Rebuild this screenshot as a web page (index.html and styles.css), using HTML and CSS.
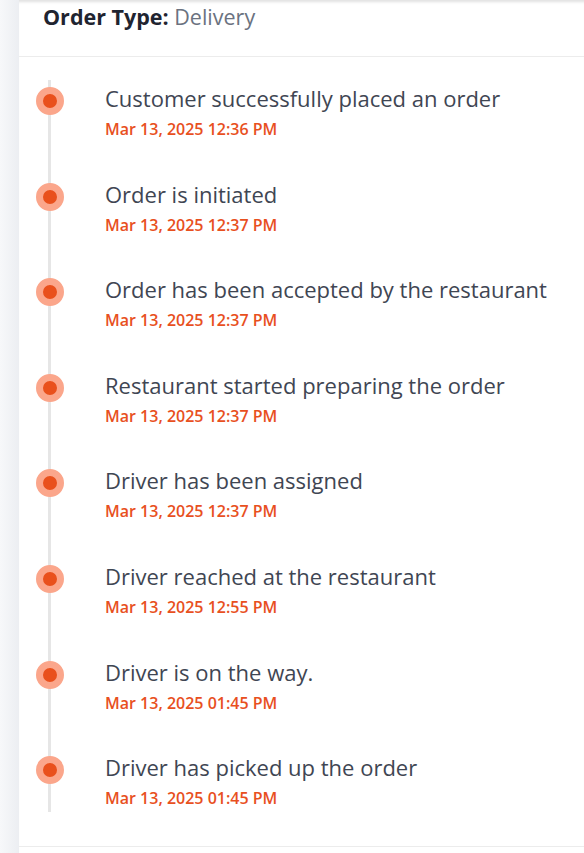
FILE: index.html
```html
<!DOCTYPE html>
<html>
  <head>
    <meta charset="utf-8" />
    <title>Order Timeline</title>
    <link rel="stylesheet" href="styles.css">
  </head>
  <body>
    <div class="page">
      <div class="card">
        <div class="card-header">
          <span class="label">Order Type:</span> <span class="value">Delivery</span>
        </div>

        <div class="timeline-wrap">
          <ul class="timeline">
            <li class="event">
              <span class="dot"></span>
              <div class="event-body">
                <div class="event-title">Customer successfully placed an order</div>
                <div class="event-date">Mar 13, 2025 12:36 PM</div>
              </div>
            </li>
            <li class="event">
              <span class="dot"></span>
              <div class="event-body">
                <div class="event-title">Order is initiated</div>
                <div class="event-date">Mar 13, 2025 12:37 PM</div>
              </div>
            </li>
            <li class="event">
              <span class="dot"></span>
              <div class="event-body">
                <div class="event-title">Order has been accepted by the restaurant</div>
                <div class="event-date">Mar 13, 2025 12:37 PM</div>
              </div>
            </li>
            <li class="event">
              <span class="dot"></span>
              <div class="event-body">
                <div class="event-title">Restaurant started preparing the order</div>
                <div class="event-date">Mar 13, 2025 12:37 PM</div>
              </div>
            </li>
            <li class="event">
              <span class="dot"></span>
              <div class="event-body">
                <div class="event-title">Driver has been assigned</div>
                <div class="event-date">Mar 13, 2025 12:37 PM</div>
              </div>
            </li>
            <li class="event">
              <span class="dot"></span>
              <div class="event-body">
                <div class="event-title">Driver reached at the restaurant</div>
                <div class="event-date">Mar 13, 2025 12:55 PM</div>
              </div>
            </li>
            <li class="event">
              <span class="dot"></span>
              <div class="event-body">
                <div class="event-title">Driver is on the way.</div>
                <div class="event-date">Mar 13, 2025 01:45 PM</div>
              </div>
            </li>
            <li class="event">
              <span class="dot"></span>
              <div class="event-body">
                <div class="event-title">Driver has picked up the order</div>
                <div class="event-date">Mar 13, 2025 01:45 PM</div>
              </div>
            </li>
          </ul>
        </div>
      </div>
    </div>
  </body>
</html>
```

FILE: styles.css
```css
body {
  margin: 0;
  font-family: "Open Sans", "Noto Sans", sans-serif;
  background: linear-gradient(to right, #f7f8fa, #eceef2);
  background-repeat: no-repeat;
  background-size: 19px 100%;
  background-color: #f4f5f7;
}
.page {
  padding-left: 19px;
  min-height: 853px;
}
.card {
  background: #fff;
  min-height: 853px;
  box-shadow: inset 0 4px 3px -2px rgba(0, 0, 0, 0.12);
}
.card-header {
  height: 57px;
  padding: 0 24px;
  font-size: 21.5px;
  line-height: 33px;
  border-bottom: 1px solid #ececec;
  box-sizing: border-box;
}
.label {
  font-weight: 700;
  color: #1f2430;
}
.value {
  color: #6b7280;
}
.timeline-wrap {
  padding: 23px 0 34px;
  border-bottom: 1px solid #ececec;
}
.timeline {
  list-style: none;
  margin: 0 0 0 29px;
  padding: 0;
  border-left: 3px solid #e6e6e6;
  display: flex;
  flex-direction: column;
  gap: 32.6px;
}
.event {
  display: flex;
  align-items: flex-start;
  min-height: 63px;
}
.dot {
  flex: none;
  width: 14px;
  height: 14px;
  margin: 7px 0 0 -15px;
  border-radius: 50%;
  background: #e9501c;
  border: 7px solid #fba68b;
}
.event-body {
  margin-left: 41px;
  padding-top: 4px;
}
.event-title {
  font-size: 22px;
  line-height: 28px;
  color: #3f4653;
}
.event-date {
  margin-top: 6px;
  font-size: 16px;
  line-height: 22px;
  font-weight: 600;
  color: #e8501e;
}
```
